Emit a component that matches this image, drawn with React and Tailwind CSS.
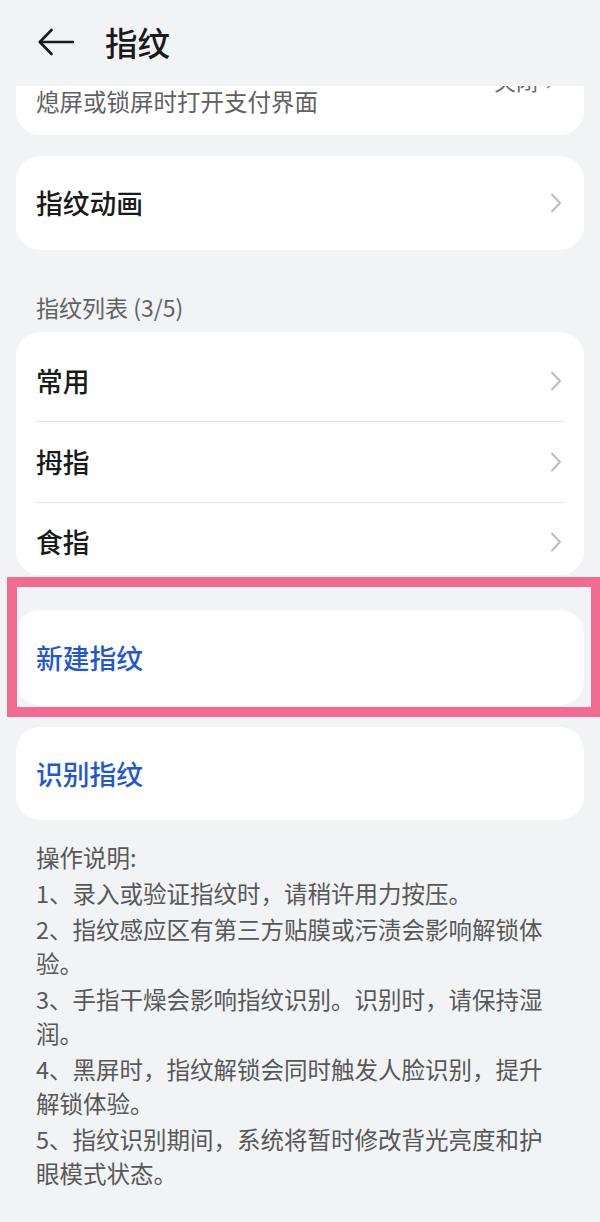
import React from "react";

const Chevron = () => (
  <svg width="12" height="20" viewBox="0 0 12 20" fill="none" className="mr-[2px] shrink-0">
    <path d="M2 1.5 L10 10 L2 18.5" stroke="#bcbcbc" strokeWidth="2" strokeLinecap="round" strokeLinejoin="round" />
  </svg>
);

const notes = [
  "1、录入或验证指纹时，请稍许用力按压。",
  "2、指纹感应区有第三方贴膜或污渍会影响解锁体验。",
  "3、手指干燥会影响指纹识别。识别时，请保持湿润。",
  "4、黑屏时，指纹解锁会同时触发人脸识别，提升解锁体验。",
  "5、指纹识别期间，系统将暂时修改背光亮度和护眼模式状态。",
];

export default function App() {
  return (
    <div
      className="relative w-[600px] h-[1222px] overflow-hidden bg-[#f1f3f5] text-[#1a1a1a]"
      style={{ fontFamily: '"Noto Sans CJK SC", "Noto Sans", sans-serif' }}
    >
      {/* Header */}
      <div className="h-[84px] flex items-center pl-[38px]">
        <svg width="36" height="28" viewBox="0 0 36 28" fill="none" className="shrink-0">
          <path d="M35 14 H2.5" stroke="#1a1a1a" strokeWidth="2.6" strokeLinecap="round" />
          <path d="M13.5 2 L1.8 14 L13.5 26" stroke="#1a1a1a" strokeWidth="2.6" strokeLinecap="round" strokeLinejoin="round" />
        </svg>
        <div className="ml-[31px] text-[32.5px] leading-[40px] font-medium">指纹</div>
      </div>

      {/* Partially scrolled card */}
      <div className="relative mx-4 mt-[2px] h-[49px] overflow-hidden bg-white rounded-b-[24px] pl-5 pr-[26px]">
        <div className="pt-[3px] text-[23.5px] leading-[24px] text-[#616161]">熄屏或锁屏时打开支付界面</div>
        <div className="absolute right-[28px] top-[-18px] text-[22px] leading-[24px] text-[#6a6a6a] flex items-center gap-2">
          关闭
          <svg width="10" height="18" viewBox="0 0 10 18" fill="none">
            <path d="M2 1.5 L8 9 L2 16.5" stroke="#9a9a9a" strokeWidth="2" strokeLinecap="round" />
          </svg>
        </div>
      </div>

      {/* 指纹动画 */}
      <div className="mx-4 mt-[21px] h-[94px] bg-white rounded-[24px] flex items-center justify-between px-5">
        <span className="text-[26.75px] leading-[32px] font-medium">指纹动画</span>
        <Chevron />
      </div>

      {/* Section label */}
      <div className="mt-[42px] pl-[36px] text-[23px] leading-[30px] text-[#626262]">指纹列表 (3/5)</div>

      {/* Fingerprint list */}
      <div className="mx-4 mt-[10px] pt-[9px] bg-white rounded-[24px] px-5">
        {["常用", "拇指", "食指"].map((name, i) => (
          <div
            key={name}
            className={
              i < 2
                ? "h-[81px] flex items-center justify-between border-b border-[#e5e5e5]"
                : "h-[72px] pt-[6px] flex items-center justify-between"
            }
          >
            <span className="text-[26.75px] leading-[32px] font-medium">{name}</span>
            <Chevron />
          </div>
        ))}
      </div>

      {/* 新建指纹 */}
      <div className="mx-4 mt-[35px] h-[95px] bg-white rounded-[24px] flex items-center px-5">
        <span className="text-[26.75px] leading-[32px] font-medium text-[#1f57d6]">新建指纹</span>
      </div>

      {/* 识别指纹 */}
      <div className="mx-4 mt-[22px] h-[93px] bg-white rounded-[24px] flex items-center px-5">
        <span className="text-[26.75px] leading-[32px] font-medium text-[#1f57d6]">识别指纹</span>
      </div>

      {/* Notes */}
      <div className="ml-[36px] mt-[20px] w-[515px] flex flex-col gap-[2px] text-[23.5px] leading-[34px] text-[#585858]">
        <p>操作说明:</p>
        {notes.map((n) => (
          <p key={n}>{n}</p>
        ))}
      </div>

      {/* Highlight overlay */}
      <div className="absolute left-[7px] top-[577px] w-[594px] h-[140px] border-[10px] border-[#f26b90] pointer-events-none" />
    </div>
  );
}
